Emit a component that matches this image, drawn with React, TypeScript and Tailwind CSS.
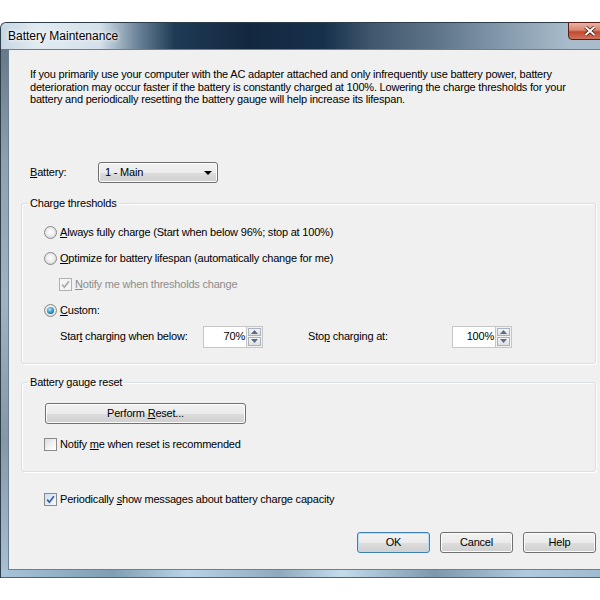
import React from "react";

function Radio({ checked }: { checked?: boolean }) {
  return (
    <span className="w-[13px] h-[13px] shrink-0 rounded-full border border-[#8a8a8a] bg-[radial-gradient(circle_at_50%_45%,#ffffff_0%,#eeeeee_45%,#c9c9c9_100%)] flex items-center justify-center">
      {checked && (
        <span className="w-[7px] h-[7px] rounded-full bg-[radial-gradient(circle_at_40%_35%,#b8ecfb_0%,#3aa0cc_45%,#0d3f5e_100%)]" />
      )}
    </span>
  );
}

function Check({ checked, disabled }: { checked?: boolean; disabled?: boolean }) {
  return (
    <span
      className={
        "w-[13px] h-[13px] shrink-0 border flex items-center justify-center " +
        (disabled
          ? "border-[#b1b1b1] bg-[#f4f4f4]"
          : "border-[#8a8a8a] bg-[linear-gradient(135deg,#dcdcdc_0%,#f5f5f5_60%,#ffffff_100%)]")
      }
    >
      {checked && (
        <svg width="9" height="9" viewBox="0 0 9 9">
          <path
            d="M1.2 4.6 L3.4 7.2 L7.9 1.3"
            stroke={disabled ? "#a8a8a8" : "#3b5aa0"}
            strokeWidth="1.7"
            fill="none"
          />
        </svg>
      )}
    </span>
  );
}

function Spin({ value }: { value: string }) {
  return (
    <div className="flex h-[22px]">
      <div className="w-[43px] h-full bg-white border border-[#c6c6c6] border-r-0 flex items-center justify-end pr-[1px]">
        {value}
      </div>
      <div className="w-[17px] h-full flex flex-col border border-[#c6c6c6]">
        <div className="flex-1 m-[1px] mb-0 border border-[#a9b2c0] bg-[linear-gradient(to_bottom,#f6f6f6,#dedede)] flex items-center justify-center">
          <svg width="7" height="4" viewBox="0 0 7 4">
            <path d="M0 4 L3.5 0 L7 4 Z" fill="#5b6b8a" />
          </svg>
        </div>
        <div className="flex-1 m-[1px] border border-[#a9b2c0] bg-[linear-gradient(to_bottom,#f6f6f6,#dedede)] flex items-center justify-center">
          <svg width="7" height="4" viewBox="0 0 7 4">
            <path d="M0 0 L3.5 4 L7 0 Z" fill="#5b6b8a" />
          </svg>
        </div>
      </div>
    </div>
  );
}

const btn =
  "h-[21px] rounded-[3px] border flex items-center justify-center bg-[linear-gradient(to_bottom,#f2f2f2_0%,#ebebeb_50%,#dddddd_51%,#cfcfcf_100%)]";

export default function App() {
  return (
    <div className="w-[600px] h-[600px] bg-white overflow-hidden font-['Liberation_Sans',Arial,sans-serif] text-[11px] tracking-[-0.2px] text-black">
      <div className="mt-[22px] w-[620px] h-[556px] flex flex-col rounded-tl-[6px] border-l border-t border-[#2e3d4a] bg-[linear-gradient(to_bottom,#5d6f7e_0%,#8ea1b0_25%,#9fb3c2_50%,#8597a6_75%,#a9c1d3_100%)]">
        {/* Title bar */}
        <div className="h-[26px] flex items-start rounded-tl-[5px] bg-[linear-gradient(to_right,#c5d6e3_0%,#e2ebf2_6%,#d3e0ea_16%,#6d859a_22%,#1f3a55_28%,#132840_40%,#16304b_52%,#40586e_60%,#5d7488_70%,#879cae_82%,#a9bccb_92%)]">
          <div className="pl-[7px] pt-[6px] text-[12px] leading-[15px] tracking-normal text-black [text-shadow:0_0_6px_#ffffff,0_0_3px_#ffffff]">
            Battery Maintenance
          </div>
          <div className="ml-auto mr-[9px] w-[43px] h-[18px] -mt-[1px] rounded-b-[4px] border border-[#5b1d14] bg-[linear-gradient(to_bottom,#eab3a6_0%,#d98572_45%,#c04a2e_55%,#d2725c_100%)] flex items-center justify-center">
            <svg width="12" height="10" viewBox="0 0 12 10">
              <path d="M1.5 1 L10.5 9 M10.5 1 L1.5 9" stroke="#3a0d06" strokeWidth="3.4" />
              <path d="M1.5 1 L10.5 9 M10.5 1 L1.5 9" stroke="#ffffff" strokeWidth="2" />
            </svg>
          </div>
        </div>

        {/* Client */}
        <div className="flex-1 flex pl-[7px]">
          <div className="w-[605px] h-full bg-[#f0f0f0] border border-[#6c7f90]">
            <div className="pt-[18px] pl-[21px] leading-[12.5px]">
              <div className="whitespace-nowrap">
                If you primarily use your computer with the AC adapter attached and only infrequently use battery power, battery
              </div>
              <div className="whitespace-nowrap">
                deterioration may occur faster if the battery is constantly charged at 100%. Lowering the charge thresholds for your
              </div>
              <div className="whitespace-nowrap">
                battery and periodically resetting the battery gauge will help increase its lifespan.
              </div>
            </div>

            {/* Battery row */}
            <div className="mt-[56.5px] ml-[21px] flex items-center h-[21px]">
              <div className="w-[68px]">
                <span className="underline">B</span>attery:
              </div>
              <div className="w-[120px] h-[21px] rounded-[3px] border border-[#707070] bg-[linear-gradient(to_bottom,#f2f2f2_0%,#ebebeb_50%,#dddddd_51%,#cfcfcf_100%)] shadow-[inset_0_0_0_1px_#fcfcfc] flex items-center pl-[6px] pr-[5px]">
                <span>1 - Main</span>
                <svg className="ml-auto" width="8" height="4" viewBox="0 0 8 4">
                  <path d="M0 0 L8 0 L4 4 Z" fill="#000" />
                </svg>
              </div>
            </div>

            {/* Charge thresholds */}
            <fieldset className="mt-[14px] ml-[12px] w-[575px] border border-[#d5dfe5] rounded-[3px] px-0 pt-[9.5px] pb-[13px] shadow-[inset_1px_1px_0_#ffffff,1px_1px_0_#ffffff]">
              <legend className="ml-[6px] px-[2px] leading-[13px]">Charge thresholds</legend>
              <div className="pl-[22px]">
                <div className="h-[26px] flex items-center gap-[3px]">
                  <Radio />
                  <span>
                    <span className="underline">A</span>lways fully charge (Start when below 96%; stop at 100%)
                  </span>
                </div>
                <div className="h-[26px] flex items-center gap-[3px]">
                  <Radio />
                  <span>
                    <span className="underline">O</span>ptimize for battery lifespan (automatically change for me)
                  </span>
                </div>
                <div className="h-[26px] flex items-center gap-[3px] pl-[15px] text-[#8d8d8d]">
                  <Check checked disabled />
                  <span>
                    <span className="underline">N</span>otify me when thresholds change
                  </span>
                </div>
                <div className="h-[26px] flex items-center gap-[3px]">
                  <Radio checked />
                  <span>
                    <span className="underline">C</span>ustom:
                  </span>
                </div>
                <div className="h-[26px] flex items-center pl-[16px]">
                  <div className="w-[143px]">
                    Star<span className="underline">t</span> charging when below:
                  </div>
                  <Spin value="70%" />
                  <div className="ml-[45px] w-[144px]">
                    Sto<span className="underline">p</span> charging at:
                  </div>
                  <Spin value="100%" />
                </div>
              </div>
            </fieldset>

            {/* Battery gauge reset */}
            <fieldset className="mt-[12.5px] ml-[12px] w-[575px] border border-[#d5dfe5] rounded-[3px] px-0 pt-[13.5px] pb-[19.5px] shadow-[inset_1px_1px_0_#ffffff,1px_1px_0_#ffffff]">
              <legend className="ml-[6px] px-[2px] leading-[13px]">Battery gauge reset</legend>
              <div className="pl-[23px]">
                <div className={btn + " w-[201px] border-[#707070] shadow-[inset_0_0_0_1px_#fcfcfc]"}>
                  <span>
                    Perform <span className="underline">R</span>eset...
                  </span>
                </div>
              </div>
              <div className="pl-[22px] mt-[14px] h-[14px] flex items-center gap-[3px]">
                <Check />
                <span>
                  Notify <span className="underline">m</span>e when reset is recommended
                </span>
              </div>
            </fieldset>

            {/* Periodically */}
            <div className="mt-[20px] ml-[35px] h-[14px] flex items-center gap-[3px]">
              <span className="w-[13px] h-[13px] shrink-0 border border-[#8a8a8a] bg-[linear-gradient(135deg,#c9def0_0%,#e4eff8_60%,#f4f9fd_100%)] flex items-center justify-center">
                <svg width="9" height="9" viewBox="0 0 9 9">
                  <path d="M1.2 4.6 L3.4 7.2 L7.9 1.3" stroke="#3b5aa0" strokeWidth="1.7" fill="none" />
                </svg>
              </span>
              <span>
                Periodically <span className="underline">s</span>how messages about battery charge capacity
              </span>
            </div>

            {/* Buttons */}
            <div className="mt-[25.5px] ml-[348px] flex gap-[10px]">
              <div className={btn + " w-[73px] border-[#3c7fb1] shadow-[inset_0_0_0_1px_#b5ddf6]"}>OK</div>
              <div className={btn + " w-[73px] border-[#707070] shadow-[inset_0_0_0_1px_#fcfcfc]"}>Cancel</div>
              <div className={btn + " w-[73px] border-[#707070] shadow-[inset_0_0_0_1px_#fcfcfc]"}>Help</div>
            </div>
          </div>
        </div>

        {/* Bottom frame */}
        <div className="h-[8px] border-b border-[#3b6a8e] bg-[linear-gradient(to_right,#a7c4da_0%,#7f9db3_18%,#b9d4e8_30%,#8faabd_45%,#c4dcec_55%,#7d98ad_70%,#b0cbe0_85%,#9ab6cb_100%)]" />
      </div>
    </div>
  );
}
